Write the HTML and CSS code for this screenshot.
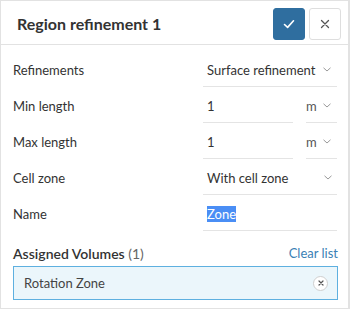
FILE: index.html
```html
<!DOCTYPE html>
<html>
<head>
<meta charset="utf-8">
<link rel="stylesheet" href="styles.css">
</head>
<body>
<div class="panel">
  <div class="header">
    <div class="title">Region refinement 1</div>
    <div class="actions">
      <button class="btn btn-ok" aria-label="Apply">
        <svg width="14" height="14" viewBox="0 0 14 14"><path d="M2.5 7.5 L5.6 10.4 L11.5 3.8" fill="none" stroke="#fff" stroke-width="1.6" stroke-linecap="round" stroke-linejoin="round"/></svg>
      </button>
      <button class="btn btn-close" aria-label="Close">
        <svg width="12" height="12" viewBox="0 0 12 12"><path d="M2.5 2.5 L9.5 9.5 M9.5 2.5 L2.5 9.5" fill="none" stroke="#555" stroke-width="1.3" stroke-linecap="round"/></svg>
      </button>
    </div>
  </div>
  <div class="body">
    <div class="row">
      <div class="label">Refinements</div>
      <div class="field select"><span>Surface refinement</span><svg class="chev" width="8" height="5" viewBox="0 0 8 5"><path d="M0.5 0.8 L4 4 L7.5 0.8" fill="none" stroke="#999" stroke-width="1"/></svg></div>
    </div>
    <div class="row">
      <div class="label">Min length</div>
      <div class="pair">
        <div class="field input"><span>1</span></div>
        <div class="field unit"><span>m</span><svg class="chev" width="8" height="5" viewBox="0 0 8 5"><path d="M0.5 0.8 L4 4 L7.5 0.8" fill="none" stroke="#999" stroke-width="1"/></svg></div>
      </div>
    </div>
    <div class="row">
      <div class="label">Max length</div>
      <div class="pair">
        <div class="field input"><span>1</span></div>
        <div class="field unit"><span>m</span><svg class="chev" width="8" height="5" viewBox="0 0 8 5"><path d="M0.5 0.8 L4 4 L7.5 0.8" fill="none" stroke="#999" stroke-width="1"/></svg></div>
      </div>
    </div>
    <div class="row">
      <div class="label">Cell zone</div>
      <div class="field select"><span>With cell zone</span><svg class="chev chev-far" width="8" height="5" viewBox="0 0 8 5"><path d="M0.5 0.8 L4 4 L7.5 0.8" fill="none" stroke="#999" stroke-width="1"/></svg></div>
    </div>
    <div class="row">
      <div class="label">Name</div>
      <div class="field input wide"><span class="sel">Zone</span></div>
    </div>
    <div class="section">
      <div class="section-title">Assigned Volumes <span class="count">(1)</span></div>
      <a class="clear">Clear list</a>
    </div>
    <div class="chip">
      <span>Rotation Zone</span>
      <span class="remove"><svg width="8" height="8" viewBox="0 0 8 8"><path d="M2 2 L6 6 M6 2 L2 6" fill="none" stroke="#555" stroke-width="1.2" stroke-linecap="round"/></svg></span>
    </div>
  </div>
</div>
</body>
</html>
```
FILE: styles.css
```css
* { box-sizing: border-box; }
html, body { margin: 0; padding: 0; background: #fff; }
body { font-family: Lato, "Open Sans", Arial, sans-serif; color: #333; }
.panel {
  width: 350px;
  height: 309px;
  border: 1px solid #e2e2e2;
  border-right-width: 2px;
  display: flex;
  flex-direction: column;
}
.header {
  height: 44px;
  border-bottom: 1px solid #e2e2e2;
  display: flex;
  align-items: center;
  justify-content: space-between;
  padding: 0 7px 0 16px;
  flex-shrink: 0;
}
.title { font-size: 16px; font-weight: 700; color: #333; padding-top: 1px; }
.actions { display: flex; gap: 4px; padding-top: 2px; }
.btn {
  width: 32px; height: 32px; padding: 0; margin: 0;
  border-radius: 3px;
  display: flex; align-items: center; justify-content: center;
  cursor: pointer;
}
.btn-ok { background: #2f6e9f; border: 1px solid #2f6e9f; }
.btn-close { background: #fff; border: 1px solid #dedede; }
.body { padding: 6px 10px 0 12px; }
.row {
  height: 36px;
  display: flex;
  align-items: stretch;
}
.label {
  width: 190px;
  font-size: 13px;
  color: #333;
  display: flex;
  align-items: center;
  padding-top: 2px;
}
.field {
  border-bottom: 1px solid #e4e4e4;
  font-size: 13px;
  color: #333;
  display: flex;
  align-items: center;
  padding-left: 4px;
  padding-top: 2px;
}
.select { width: 134px; justify-content: space-between; padding-right: 6px; }
.select .chev-far { margin-right: -1px; }
.pair { display: flex; gap: 13px; width: 134px; }
.input { width: 90px; }
.input.wide { width: 134px; }
.unit { width: 31px; padding-left: 0; justify-content: space-between; padding-right: 6px; }
.unit span { color: #555; }
.chev { flex-shrink: 0; }
.sel { background: #4a8ef5; color: #fff; }
.section {
  display: flex;
  justify-content: space-between;
  align-items: center;
  margin-top: 12px;
  height: 20px;
}
.section-title { font-size: 14px; font-weight: 600; color: #333; }
.section-title .count { font-weight: 400; color: #666; }
.clear { font-size: 13px; color: #3b7fb5; margin-right: 0; }
.chip {
  margin-top: 3px;
  height: 34px;
  border: 1px solid #5eb0e0;
  background: #ebf6fb;
  display: flex;
  align-items: center;
  justify-content: space-between;
  padding: 0 9px 0 10px;
  font-size: 13px;
  color: #444;
}
.remove {
  width: 15px; height: 15px;
  border-radius: 50%;
  border: 1px solid #cfcfcf;
  background: #fff;
  display: flex; align-items: center; justify-content: center;
}
```
